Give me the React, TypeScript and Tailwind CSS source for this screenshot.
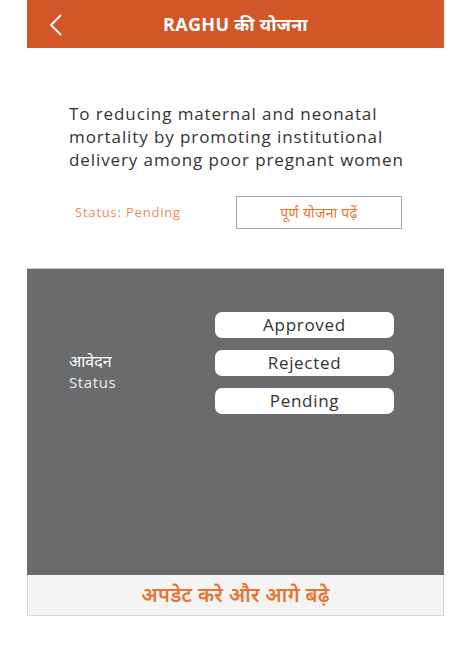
import React from "react";

export default function App() {
  const font = { fontFamily: '"Open Sans", "Noto Sans", sans-serif' };
  return (
    <div className="w-[469px] h-[656px] bg-white" style={font}>
      <div className="ml-[27px] w-[417px]">
        <div className="h-[48px] bg-[#d25627] flex items-center relative">
          <svg className="absolute left-[21px] top-[13px]" width="16" height="24" viewBox="0 0 16 24">
            <path d="M13 2 L3 12 L13 22" fill="none" stroke="#fff" strokeWidth="2" />
          </svg>
          <div className="w-full text-center text-white font-bold text-[18px] tracking-[0.3px]">RAGHU की योजना</div>
        </div>
        <div className="pt-[54px] pl-[42px] pr-[10px] text-[17px] leading-[23px] tracking-[0.9px] text-[#333]">
          To reducing maternal and neonatal mortality by promoting institutional delivery among poor pregnant women
        </div>
        <div className="mt-[25px] flex items-center h-[33px]">
          <div className="ml-[48px] w-[161px] text-[13px] text-[#f08a5a] tracking-[0.8px]">Status: Pending</div>
          <div className="w-[166px] h-[33px] border border-[#a8a8a8] flex items-center justify-center text-[14px] text-[#e8752e] tracking-[0.3px]">
            पूर्ण योजना पढ़ें
          </div>
        </div>
        <div className="mt-[39px] h-[307px] bg-[#6a6b6d] border-t border-[#c4c4c4] flex">
          <div className="w-[188px] pl-[42px] pt-[81px] text-white">
            <div className="text-[16px] leading-[22px]">आवेदन</div>
            <div className="text-[15px] leading-[20px] tracking-[0.6px] text-[#eee]">Status</div>
          </div>
          <div className="pt-[43px] flex flex-col gap-[12px]">
            {["Approved", "Rejected", "Pending"].map((t) => (
              <div key={t} className="w-[179px] h-[26px] bg-white rounded-[7px] flex items-center justify-center text-[17px] tracking-[0.7px] text-[#333]">
                {t}
              </div>
            ))}
          </div>
        </div>
        <div className="h-[41px] bg-[#f4f4f4] border border-t-0 border-[#d8d8d8] flex items-center justify-center text-[#e8752e] text-[20px] font-semibold tracking-[0.3px]">
          अपडेट करे और आगे बढ़े
        </div>
      </div>
    </div>
  );
}
